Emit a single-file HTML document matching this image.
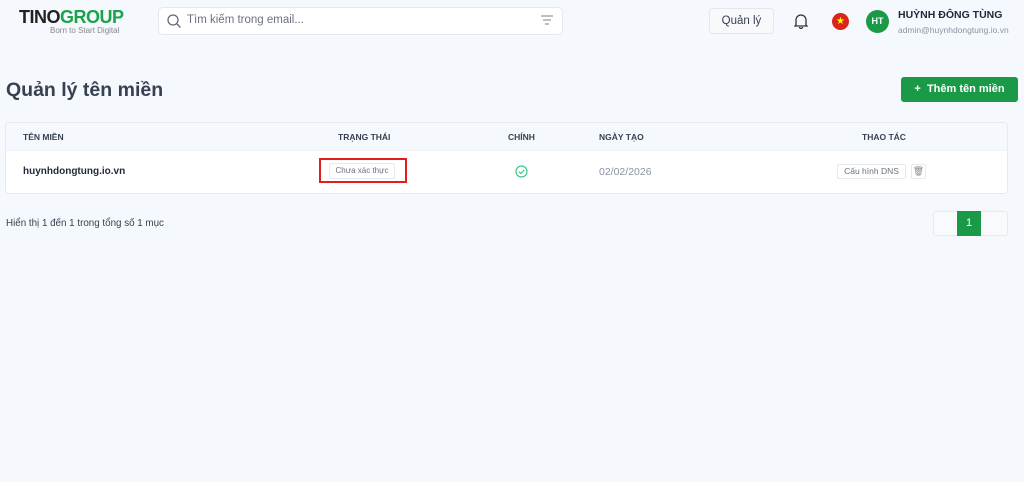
<!DOCTYPE html>
<html><head><meta charset="utf-8"><style>
*{box-sizing:border-box;margin:0;padding:0}
body{width:1024px;height:482px;background:#f5f8fc;font-family:"Liberation Sans",sans-serif;position:relative;overflow:hidden;color:#2d3340}
.a{position:absolute}
</style></head><body>
<div class="a" style="left:19px;top:7px;font-size:18px;font-weight:bold;letter-spacing:-0.5px;color:#222">TINO<span style="color:#1aa34a">GROUP</span></div>
<div class="a" style="left:50px;top:26px;font-size:8px;color:#888">Born to Start Digital</div>
<div class="a" style="left:158px;top:7px;width:405px;height:28px;background:#fff;border:1px solid #e4e8ee;border-radius:5px"></div>
<svg class="a" style="left:166px;top:13px" width="16" height="16" viewBox="0 0 16 16"><circle cx="7" cy="7" r="5" fill="none" stroke="#667" stroke-width="1.3"/><path d="M11 11l3.5 3.5" stroke="#667" stroke-width="1.3"/></svg>
<div class="a" style="left:187px;top:14px;font-size:11.5px;color:#6b7280">Tìm kiếm trong email...</div>
<svg class="a" style="left:541px;top:15px" width="12" height="10"><path d="M0 1h12M2 5h8M4 9h4" stroke="#999" stroke-width="1.2"/></svg>
<div class="a" style="left:709px;top:8px;width:65px;height:26px;background:#f7f9fb;border:1px solid #e4e8ee;border-radius:4px;font-size:11.5px;color:#374151;text-align:center;line-height:25px">Quản lý</div>
<svg class="a" style="left:794px;top:13px" width="14" height="16" viewBox="0 0 14 16"><path d="M2 12V7a5 5 0 0 1 10 0v5l1 1H1z M5.5 14a1.5 1.5 0 0 0 3 0" fill="none" stroke="#333" stroke-width="1.3"/></svg>
<div class="a" style="left:832px;top:13px;width:17px;height:17px;border-radius:50%;background:#da251d;color:#ff0;font-size:10px;text-align:center;line-height:17px">★</div>
<div class="a" style="left:866px;top:10px;width:23px;height:23px;border-radius:50%;background:#1a9a46;color:#fff;font-size:9px;font-weight:bold;text-align:center;line-height:23px">HT</div>
<div class="a" style="left:898px;top:9px;font-size:10.5px;font-weight:bold;color:#1f2937">HUỲNH ĐÔNG TÙNG</div>
<div class="a" style="left:898px;top:25px;font-size:8.5px;color:#8a93a3">admin@huynhdongtung.io.vn</div>
<div class="a" style="left:6px;top:79px;font-size:19.5px;font-weight:bold;color:#374151">Quản lý tên miền</div>
<div class="a" style="left:901px;top:77px;width:117px;height:25px;background:#1a9a46;border-radius:3px;color:#fff;font-size:11px;font-weight:bold;text-align:center;line-height:25px">+&nbsp; Thêm tên miền</div>
<div class="a" style="left:5px;top:122px;width:1003px;height:72px;background:#fff;border:1px solid #e6eaf0;border-radius:4px;overflow:hidden">
<div style="height:28px;background:#f5f8fc;border-bottom:1px solid #eef1f5"></div></div>
<div class="a" style="left:23px;top:132px;font-size:8.5px;font-weight:bold;color:#374151">TÊN MIỀN</div>
<div class="a" style="left:338px;top:132px;font-size:8.5px;font-weight:bold;color:#374151">TRẠNG THÁI</div>
<div class="a" style="left:508px;top:132px;font-size:8.5px;font-weight:bold;color:#374151">CHÍNH</div>
<div class="a" style="left:599px;top:132px;font-size:8.5px;font-weight:bold;color:#374151">NGÀY TẠO</div>
<div class="a" style="left:862px;top:132px;font-size:8.5px;font-weight:bold;color:#374151">THAO TÁC</div>
<div class="a" style="left:23px;top:166px;font-size:10px;font-weight:bold;color:#1f2937">huynhdongtung.io.vn</div>
<div class="a" style="left:319px;top:158px;width:88px;height:25px;border:2px solid #e01e1e"></div>
<div class="a" style="left:329px;top:163px;width:66px;height:16px;border:1px solid #e6eaf0;border-radius:2px;font-size:8px;color:#6b7280;text-align:center;line-height:14px">Chưa xác thực</div>
<svg class="a" style="left:515px;top:165px" width="13" height="13"><circle cx="6.5" cy="6.5" r="5.5" fill="none" stroke="#3cc88c" stroke-width="1.2"/><path d="M4 6.7l1.8 1.8L9.2 5" fill="none" stroke="#3cc88c" stroke-width="1.2"/></svg>
<div class="a" style="left:599px;top:166px;font-size:10.5px;color:#8a93a3">02/02/2026</div>
<div class="a" style="left:837px;top:164px;width:69px;height:15px;border:1px solid #e6eaf0;border-radius:2px;font-size:8.5px;color:#6b7280;text-align:center;line-height:13px">Cấu hình DNS</div>
<div class="a" style="left:911px;top:164px;width:15px;height:15px;border:1px solid #e6eaf0;border-radius:2px;font-size:9px;color:#888;text-align:center;line-height:13px">🗑</div>
<div class="a" style="left:6px;top:218px;font-size:9.8px;color:#374151">Hiển thị 1 đến 1 trong tổng số 1 mục</div>
<div class="a" style="left:933px;top:211px;width:75px;height:25px;background:#f8fafc;border:1px solid #e6eaf0;border-radius:3px"></div>
<div class="a" style="left:957px;top:211px;width:24px;height:25px;background:#1a9a46;color:#fff;font-size:11px;text-align:center;line-height:25px">1</div>
</body></html>
